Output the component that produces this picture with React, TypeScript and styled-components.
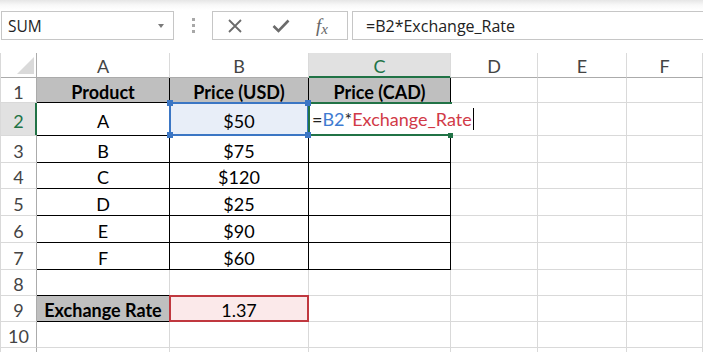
import React from "react";
import styled, { createGlobalStyle, css } from "styled-components";

const GREEN = "#217346";
const BLUE = "#3b76c4";
const RED = "#c0383f";
const GRID = "#d9d9d9";
const HEAD_LINE = "#ababab";

const GlobalStyle = createGlobalStyle`
  html, body {
    margin: 0;
    padding: 0;
    background: #fff;
  }
  body {
    font-family: Lato, "Liberation Sans", sans-serif;
  }
`;

const Screen = styled.div`
  width: 703px;
  height: 352px;
  overflow: hidden;
  background: #fff;
`;

/* formula bar */

const Toolbar = styled.div`
  height: 53px;
  box-sizing: border-box;
  padding: 11px 0 13px 1px;
  display: flex;
  background: linear-gradient(#e6e6e6 0px, #f8f8f8 5px, #fff 10px);
`;

const NameBox = styled.div`
  width: 173px;
  box-sizing: border-box;
  border: 1px solid #c6c6c6;
  background: #fff;
  display: flex;
  align-items: center;
  justify-content: space-between;
  padding: 0 9px 0 6px;
  font-family: "Open Sans", sans-serif;
  font-size: 15.5px;
  color: #222;
`;

const DropArrow = styled.span`
  width: 0;
  height: 0;
  border-left: 3.5px solid transparent;
  border-right: 3.5px solid transparent;
  border-top: 4px solid #7a7a7a;
`;

const Grip = styled.div`
  width: 38px;
  display: flex;
  flex-direction: column;
  align-items: center;
  justify-content: center;
  gap: 3px;

  span {
    width: 3px;
    height: 3px;
    background: #a8a8a8;
  }
`;

const FxBox = styled.div`
  width: 136px;
  box-sizing: border-box;
  border: 1px solid #c6c6c6;
  background: #fff;
  display: flex;
  align-items: center;
`;

const IconSlot = styled.div<{ $w: number }>`
  width: ${(p) => p.$w}px;
  display: flex;
  align-items: center;
  justify-content: center;
`;

const FxLabel = styled.span`
  font-family: "Liberation Serif", serif;
  font-style: italic;
  color: #666;
  font-size: 19px;
  line-height: 1;

  small {
    font-size: 15px;
    position: relative;
    top: 2px;
  }
`;

const FormulaInput = styled.div`
  flex: 1;
  margin-left: 4px;
  box-sizing: border-box;
  border: 1px solid #c6c6c6;
  border-right: none;
  background: #fff;
  display: flex;
  align-items: center;
  padding-left: 13px;
  font-family: "Open Sans", sans-serif;
  font-size: 16px;
  color: #222;
`;

/* grid */

const Sheet = styled.div`
  display: grid;
  grid-template-columns: 36px 133px 139px 142px 87px 89px 76px;
  grid-template-rows: 25px 25px 33px 27px 26px 27px 27px 27px 26px 26px 26px 26px;
  border-left: 1px solid ${GRID};
  font-size: 18px;
`;

const ColHead = styled.div<{ $active?: boolean }>`
  box-sizing: border-box;
  display: flex;
  align-items: center;
  justify-content: center;
  padding-top: 1px;
  border-right: 1px solid #dadada;
  border-bottom: 1px solid ${HEAD_LINE};
  color: #444;
  background: #fff;

  ${(p) =>
    p.$active &&
    css`
      background: #e1e1e1;
      color: ${GREEN};
      border-bottom-color: ${GREEN};
      box-shadow: inset 0 -1px ${GREEN};
    `}
`;

const Corner = styled(ColHead)`
  align-items: flex-end;
  justify-content: flex-end;
  padding: 0 2px 3px 0;
  border-right-color: ${HEAD_LINE};
`;

const RowHead = styled.div<{ $active?: boolean }>`
  box-sizing: border-box;
  display: flex;
  align-items: center;
  justify-content: center;
  padding-top: 3px;
  border-right: 1px solid ${HEAD_LINE};
  border-bottom: 1px solid ${GRID};
  color: #444;

  ${(p) =>
    p.$active &&
    css`
      background: #e1e1e1;
      color: ${GREEN};
      border-right-color: ${GREEN};
      box-shadow: inset -1px 0 ${GREEN};
    `}
`;

type Kind = "grid" | "table" | "title" | "edge" | "select" | "edit" | "rate";

const frame = (color: string) => css`
  &::after {
    content: "";
    position: absolute;
    left: -1px;
    top: -1px;
    right: -1px;
    bottom: -1px;
    border: 2px solid ${color};
    pointer-events: none;
  }
`;

const Cell = styled.div<{ $kind: Kind }>`
  box-sizing: border-box;
  position: relative;
  display: flex;
  align-items: center;
  justify-content: center;
  padding-top: 3px;
  white-space: nowrap;
  color: #000;
  border-right: 1px solid ${GRID};
  border-bottom: 1px solid ${GRID};

  ${(p) =>
    (p.$kind === "table" || p.$kind === "title" || p.$kind === "select") &&
    css`
      border-right-color: #000;
      border-bottom-color: #000;
    `}

  ${(p) =>
    p.$kind === "title" &&
    css`
      background: #bfbfbf;
      font-weight: 700;
    `}

  ${(p) =>
    p.$kind === "edge" &&
    css`
      border-bottom-color: #000;
    `}

  ${(p) =>
    p.$kind === "select" &&
    css`
      background: #e8eef8;
      ${frame(BLUE)}
    `}

  ${(p) =>
    p.$kind === "rate" &&
    css`
      background: #fbe9ea;
      ${frame(RED)}
    `}

  ${(p) =>
    p.$kind === "edit" &&
    css`
      z-index: 2;
      justify-content: flex-start;
      padding-left: 3px;
      padding-top: 0;
      background: #fff;
      border-right-color: transparent;
      &::after {
        content: "";
        position: absolute;
        left: -1px;
        top: -1px;
        right: -2px;
        bottom: -1px;
        border: 2px solid ${GREEN};
        border-right: none;
        pointer-events: none;
      }
    `}
`;

const Handle = styled.span<{ $x: "l" | "r"; $y: "t" | "b"; $color: string; $size: number }>`
  position: absolute;
  z-index: 3;
  width: ${(p) => p.$size}px;
  height: ${(p) => p.$size}px;
  background: ${(p) => p.$color};
  ${(p) => (p.$x === "l" ? "left" : "right")}: ${(p) => -p.$size / 2}px;
  ${(p) => (p.$y === "t" ? "top" : "bottom")}: ${(p) => -p.$size / 2}px;
`;

const Ref = styled.span<{ $color: string }>`
  color: ${(p) => p.$color};
`;

const Caret = styled.span`
  display: inline-block;
  width: 1px;
  height: 22px;
  margin-left: 1px;
  background: #000;
  vertical-align: middle;
`;

const FormulaText = styled.span`
  position: relative;
  z-index: 1;
  color: #222;
  display: flex;
  align-items: center;
`;

const COLS = ["A", "B", "C", "D", "E", "F"];

const data: string[][] = [
  ["Product", "Price (USD)", "Price (CAD)"],
  ["A", "$50", ""],
  ["B", "$75", ""],
  ["C", "$120", ""],
  ["D", "$25", ""],
  ["E", "$90", ""],
  ["F", "$60", ""],
];

function kindFor(r: number, c: number): Kind {
  if (r === 2 && c === 1) return "select";
  if (r === 2 && c === 2) return "edit";
  if (r === 1 && c < 3) return "title";
  if (r <= 7 && c < 3) return "table";
  if (r === 8 && c === 0) return "edge";
  if (r === 9 && c === 0) return "title";
  if (r === 9 && c === 1) return "rate";
  return "grid";
}

function textFor(r: number, c: number): React.ReactNode {
  if (r <= 7 && c < 3 && !(r === 2 && c === 2)) return data[r - 1][c];
  if (r === 9 && c === 0) return "Exchange Rate";
  if (r === 9 && c === 1) return "1.37";
  return null;
}

const Formula = () => (
  <FormulaText>
    =<Ref $color="#3e7bd1">B2</Ref>*<Ref $color="#d13a47">Exchange_Rate</Ref>
    <Caret />
  </FormulaText>
);

const XIcon = () => (
  <svg width="14" height="14" viewBox="0 0 14 14">
    <path d="M1 1L13 13M13 1L1 13" stroke="#6b6b6b" strokeWidth="1.8" fill="none" />
  </svg>
);

const CheckIcon = () => (
  <svg width="18" height="14" viewBox="0 0 18 14">
    <polyline points="1.5,7 6.5,12 16.5,1.5" stroke="#6b6b6b" strokeWidth="2.6" fill="none" />
  </svg>
);

const CornerMark = () => (
  <svg width="17" height="17" viewBox="0 0 17 17">
    <polygon points="0,17 17,0 17,17" fill="#dadada" />
  </svg>
);

export default function App() {
  // row 11 only peeks in at the bottom edge, its number is not visible
  const rows = Array.from({ length: 11 }, (_, i) => i + 1);

  return (
    <Screen>
      <GlobalStyle />
      <Toolbar>
        <NameBox>
          SUM
          <DropArrow />
        </NameBox>
        <Grip>
          <span />
          <span />
          <span />
        </Grip>
        <FxBox>
          <IconSlot $w={44}>
            <XIcon />
          </IconSlot>
          <IconSlot $w={47}>
            <CheckIcon />
          </IconSlot>
          <IconSlot $w={36}>
            <FxLabel>
              f<small>x</small>
            </FxLabel>
          </IconSlot>
        </FxBox>
        <FormulaInput>=B2*Exchange_Rate</FormulaInput>
      </Toolbar>

      <Sheet>
        <Corner>
          <CornerMark />
        </Corner>
        {COLS.map((c, i) => (
          <ColHead key={i} $active={c === "C"}>
            {c}
          </ColHead>
        ))}

        {rows.map((r) => (
          <React.Fragment key={r}>
            <RowHead $active={r === 2}>{r <= 10 ? r : null}</RowHead>
            {COLS.map((_, c) => {
              const kind = kindFor(r, c);
              return (
                <Cell key={c} $kind={kind}>
                  {kind === "edit" ? <Formula /> : textFor(r, c)}
                  {kind === "select" && (
                    <>
                      <Handle $x="l" $y="t" $color={BLUE} $size={6} />
                      <Handle $x="r" $y="t" $color={BLUE} $size={6} />
                      <Handle $x="l" $y="b" $color={BLUE} $size={6} />
                      <Handle $x="r" $y="b" $color={BLUE} $size={6} />
                    </>
                  )}
                  {kind === "edit" && <Handle $x="r" $y="b" $color={GREEN} $size={5} />}
                </Cell>
              );
            })}
          </React.Fragment>
        ))}
      </Sheet>
    </Screen>
  );
}
